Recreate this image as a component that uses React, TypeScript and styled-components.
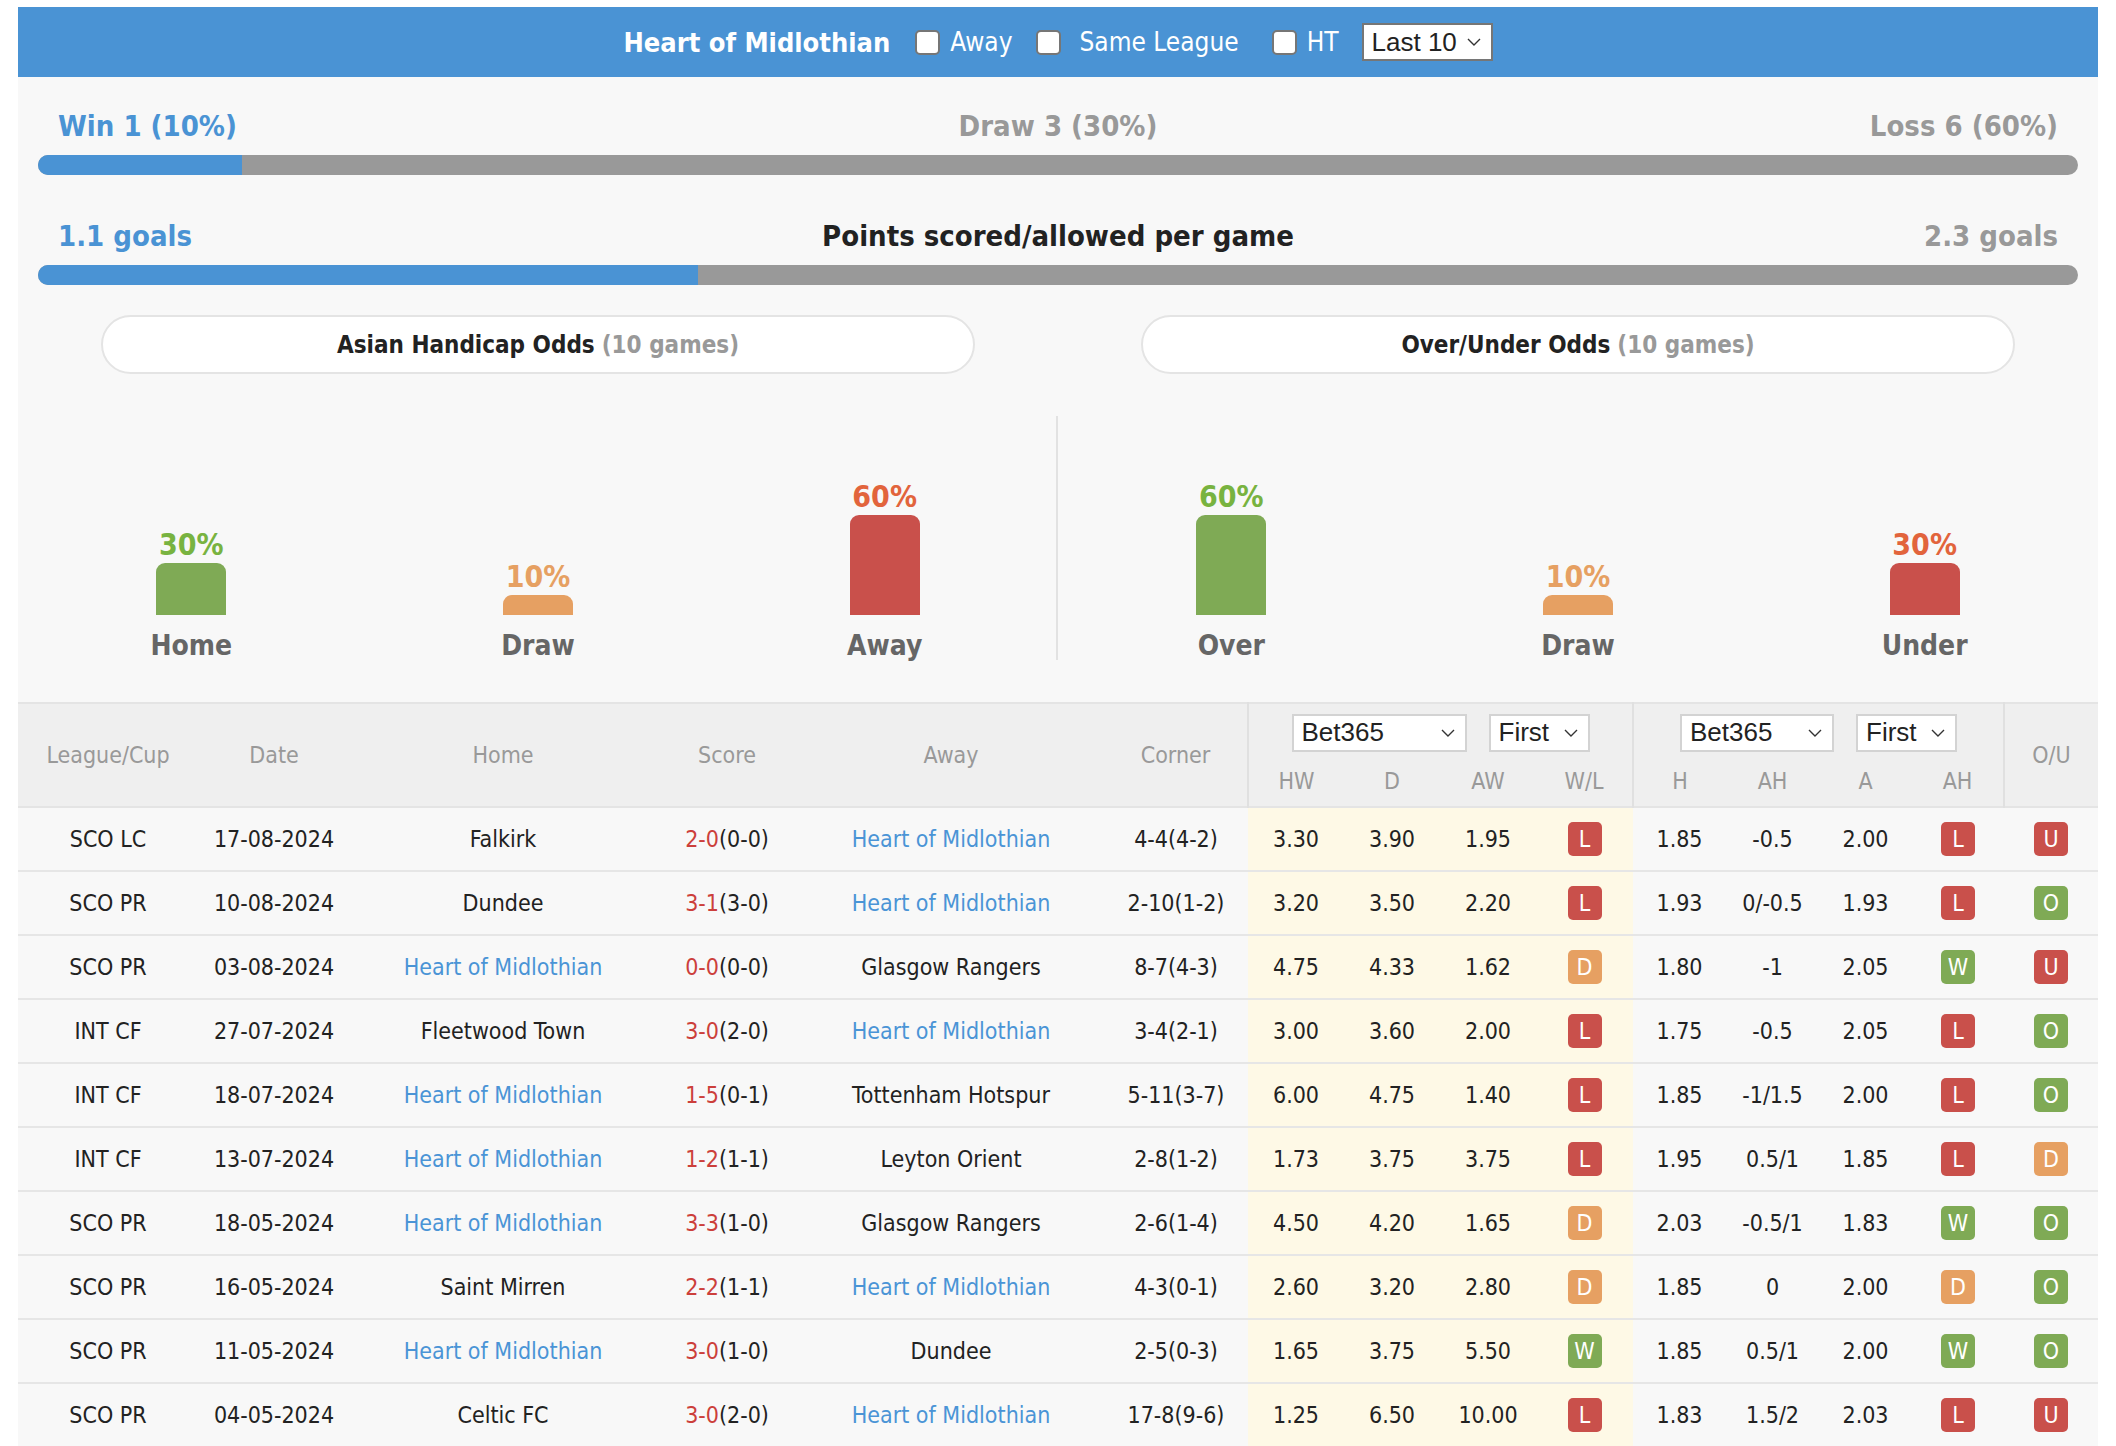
import React from 'react'
import styled, { createGlobalStyle } from 'styled-components'

const GlobalStyle = createGlobalStyle`
  body {
    margin: 0;
    padding: 7px 18px 0;
    background: #fff;
    font-family: Tahoma, "DejaVu Sans Condensed", "DejaVu Sans", sans-serif;
    font-stretch: condensed;
  }
`

const BLUE = '#4a93d4'

const Wrapper = styled.div`
  width: 2080px;
  background: #f8f8f8;
`

const HeaderBar = styled.div`
  height: 70px;
  background: ${BLUE};
  color: #fff;
  display: flex;
  align-items: center;
  justify-content: center;
  font-size: 26px;
`

const Title = styled.span`
  font-weight: bold;
  font-size: 27px;
  margin-right: 25px;
`

const Check = styled.label<{ $gap?: number }>`
  display: flex;
  align-items: center;
  margin-right: ${p => p.$gap ?? 24}px;
`

const Box = styled.input`
  appearance: none;
  width: 25px;
  height: 25px;
  margin: 0 10px 0 0;
  background: #fff;
  border: 2px solid #767676;
  border-radius: 5px;
`

const Select = styled.span<{ $w: number; $dark?: boolean }>`
  display: inline-flex;
  align-items: center;
  justify-content: space-between;
  box-sizing: border-box;
  width: ${p => p.$w}px;
  height: 38px;
  padding: 0 10px 0 8px;
  background: #fff;
  border: 2px solid ${p => (p.$dark ? '#767676' : '#d3d3d3')};
  font-family: "Liberation Sans", Arial, sans-serif;
  font-size: 26px;
  color: #222;
`

const Chevron = () => (
  <svg width="14" height="8" viewBox="0 0 14 8">
    <polyline points="1,1 7,7 13,1" fill="none" stroke="#333" strokeWidth="1.4" />
  </svg>
)

const Stats = styled.div`
  padding: 32px 20px 0;
`

const LabelRow = styled.div<{ $gapTop?: number }>`
  display: flex;
  justify-content: space-between;
  padding: 0 20px;
  margin-top: ${p => p.$gapTop ?? 0}px;
  margin-bottom: 12px;
  font-size: 29px;
  line-height: 34px;
  font-weight: bold;
`

const Label = styled.span<{ $color: string }>`
  color: ${p => p.$color};
  flex: 1;
  &:nth-child(2) { text-align: center; }
  &:last-child { text-align: right; }
`

const Bar = styled.div`
  height: 20px;
  border-radius: 10px;
  background: #999;
  overflow: hidden;
`

const Fill = styled.div`
  height: 100%;
  background: ${BLUE};
`

const Odds = styled.div`
  display: grid;
  grid-template-columns: 1fr 1fr;
  margin-top: 30px;
  padding-bottom: 42px;
`

const Half = styled.div`
  display: flex;
  flex-direction: column;
`

const Pill = styled.div`
  margin: 0 83px;
  height: 59px;
  box-sizing: border-box;
  border: 2px solid #e4e4e4;
  border-radius: 30px;
  background: #fff;
  display: flex;
  align-items: center;
  justify-content: center;
  font-size: 24px;
  font-weight: bold;
  color: #222;
  & > em {
    font-style: normal;
    color: #999;
    margin-left: 7px;
  }
`

const Chart = styled.div<{ $divided?: boolean }>`
  margin-top: 42px;
  height: 244px;
  display: grid;
  grid-template-columns: repeat(3, 1fr);
  align-items: end;
  border-left: 2px solid ${p => (p.$divided ? '#e2e2e2' : 'transparent')};
  margin-left: -2px;
`

const Column = styled.div`
  display: flex;
  flex-direction: column;
  align-items: center;
`

const Pct = styled.span<{ $color: string }>`
  font-size: 30px;
  line-height: 36px;
  font-weight: bold;
  color: ${p => p.$color};
`

const Pillar = styled.div<{ $color: string }>`
  width: 70px;
  background: ${p => p.$color};
  border-radius: 9px 9px 0 0;
`

const Caption = styled.span`
  margin-top: 17px;
  font-size: 28px;
  line-height: 28px;
  font-weight: bold;
  color: #666;
`

const Table = styled.table`
  width: 2080px;
  border-collapse: collapse;
  table-layout: fixed;
  font-size: 23px;
`

const Th = styled.th<{ $split?: boolean }>`
  background: #efefef;
  color: #999;
  font-weight: normal;
  text-align: center;
  padding: 0;
  border: 0;
  ${p => (p.$split ? 'border-left: 2px solid #e0e0e0;' : '')}
`

const HeadRow = styled.tr<{ $h: number; $top?: boolean }>`
  height: ${p => p.$h}px;
  border-top: ${p => (p.$top ? '2px solid #e4e4e4' : '0')};
  border-bottom: ${p => (p.$top ? '0' : '2px solid #e4e4e4')};
`

const SelectPair = styled.div`
  display: flex;
  justify-content: center;
  gap: 22px;
  padding-top: 6px;
`

const Row = styled.tr`
  height: 64px;
  border-bottom: 2px solid #e6e6e6;
`

const Td = styled.td<{ $odds?: boolean }>`
  text-align: center;
  color: #222;
  padding: 0;
  border: 0;
  background: ${p => (p.$odds ? '#fef9e6' : '#f8f8f8')};
`

const Team = styled.span<{ $us?: boolean }>`
  color: ${p => (p.$us ? '#4a94d6' : '#222')};
`

const Goals = styled.span`
  color: #cc3f3b;
`

const BADGE: Record<string, string> = { L: '#c9504b', W: '#7faa55', D: '#e6a062', U: '#c9504b', O: '#7faa55' }

const Badge = styled.span<{ $c: string }>`
  display: inline-flex;
  align-items: center;
  justify-content: center;
  width: 34px;
  height: 34px;
  border-radius: 5px;
  background: ${p => BADGE[p.$c] ?? '#e6a062'};
  color: #fff;
  font-size: 23px;
  vertical-align: middle;
`

type Match = {
  lg: string; date: string; home: string; ft: string; ht: string; away: string; corner: string
  hw: string; d: string; aw: string; wl: string; h: string; ah: string; a: string; ahr: string; ou: string
}

const HEARTS = 'Heart of Midlothian'

const matches: Match[] = [
  { lg: 'SCO LC', date: '17-08-2024', home: 'Falkirk', ft: '2-0', ht: '(0-0)', away: HEARTS, corner: '4-4(4-2)', hw: '3.30', d: '3.90', aw: '1.95', wl: 'L', h: '1.85', ah: '-0.5', a: '2.00', ahr: 'L', ou: 'U' },
  { lg: 'SCO PR', date: '10-08-2024', home: 'Dundee', ft: '3-1', ht: '(3-0)', away: HEARTS, corner: '2-10(1-2)', hw: '3.20', d: '3.50', aw: '2.20', wl: 'L', h: '1.93', ah: '0/-0.5', a: '1.93', ahr: 'L', ou: 'O' },
  { lg: 'SCO PR', date: '03-08-2024', home: HEARTS, ft: '0-0', ht: '(0-0)', away: 'Glasgow Rangers', corner: '8-7(4-3)', hw: '4.75', d: '4.33', aw: '1.62', wl: 'D', h: '1.80', ah: '-1', a: '2.05', ahr: 'W', ou: 'U' },
  { lg: 'INT CF', date: '27-07-2024', home: 'Fleetwood Town', ft: '3-0', ht: '(2-0)', away: HEARTS, corner: '3-4(2-1)', hw: '3.00', d: '3.60', aw: '2.00', wl: 'L', h: '1.75', ah: '-0.5', a: '2.05', ahr: 'L', ou: 'O' },
  { lg: 'INT CF', date: '18-07-2024', home: HEARTS, ft: '1-5', ht: '(0-1)', away: 'Tottenham Hotspur', corner: '5-11(3-7)', hw: '6.00', d: '4.75', aw: '1.40', wl: 'L', h: '1.85', ah: '-1/1.5', a: '2.00', ahr: 'L', ou: 'O' },
  { lg: 'INT CF', date: '13-07-2024', home: HEARTS, ft: '1-2', ht: '(1-1)', away: 'Leyton Orient', corner: '2-8(1-2)', hw: '1.73', d: '3.75', aw: '3.75', wl: 'L', h: '1.95', ah: '0.5/1', a: '1.85', ahr: 'L', ou: 'D' },
  { lg: 'SCO PR', date: '18-05-2024', home: HEARTS, ft: '3-3', ht: '(1-0)', away: 'Glasgow Rangers', corner: '2-6(1-4)', hw: '4.50', d: '4.20', aw: '1.65', wl: 'D', h: '2.03', ah: '-0.5/1', a: '1.83', ahr: 'W', ou: 'O' },
  { lg: 'SCO PR', date: '16-05-2024', home: 'Saint Mirren', ft: '2-2', ht: '(1-1)', away: HEARTS, corner: '4-3(0-1)', hw: '2.60', d: '3.20', aw: '2.80', wl: 'D', h: '1.85', ah: '0', a: '2.00', ahr: 'D', ou: 'O' },
  { lg: 'SCO PR', date: '11-05-2024', home: HEARTS, ft: '3-0', ht: '(1-0)', away: 'Dundee', corner: '2-5(0-3)', hw: '1.65', d: '3.75', aw: '5.50', wl: 'W', h: '1.85', ah: '0.5/1', a: '2.00', ahr: 'W', ou: 'O' },
  { lg: 'SCO PR', date: '04-05-2024', home: 'Celtic FC', ft: '3-0', ht: '(2-0)', away: HEARTS, corner: '17-8(9-6)', hw: '1.25', d: '6.50', aw: '10.00', wl: 'L', h: '1.83', ah: '1.5/2', a: '2.03', ahr: 'L', ou: 'U' },
]

type Slice = { label: string; pct: number; text: string; bar: string }

const handicap: Slice[] = [
  { label: 'Home', pct: 30, text: '#78b340', bar: '#7faa55' },
  { label: 'Draw', pct: 10, text: '#e6a062', bar: '#e6a062' },
  { label: 'Away', pct: 60, text: '#e2643c', bar: '#c9504b' },
]

const overUnder: Slice[] = [
  { label: 'Over', pct: 60, text: '#78b340', bar: '#7faa55' },
  { label: 'Draw', pct: 10, text: '#e6a062', bar: '#e6a062' },
  { label: 'Under', pct: 30, text: '#e2643c', bar: '#c9504b' },
]

const widths = [180, 152, 306, 142, 306, 144, 96, 96, 96, 97, 93, 93, 93, 92, 94]

const OddsHalf = ({ title, data, divided }: { title: string; data: Slice[]; divided?: boolean }) => (
  <Half>
    <Pill>{title}<em>(10 games)</em></Pill>
    <Chart $divided={divided}>
      {data.map(s => (
        <Column key={s.label}>
          <Pct $color={s.text}>{s.pct}%</Pct>
          <Pillar $color={s.bar} style={{ height: s.pct * 1.6 + 4 }} />
          <Caption>{s.label}</Caption>
        </Column>
      ))}
    </Chart>
  </Half>
)

export default function App() {
  return (
    <Wrapper>
      <GlobalStyle />
      <HeaderBar>
        <Title>Heart of Midlothian</Title>
        <Check><Box type="checkbox" />Away</Check>
        <Check $gap={33}><Box type="checkbox" style={{ marginRight: 18 }} />Same League</Check>
        <Check $gap={23}><Box type="checkbox" />HT</Check>
        <Select $w={131} $dark>Last 10<Chevron /></Select>
      </HeaderBar>

      <Stats>
        <LabelRow>
          <Label $color={BLUE}>Win 1 (10%)</Label>
          <Label $color="#999">Draw 3 (30%)</Label>
          <Label $color="#999">Loss 6 (60%)</Label>
        </LabelRow>
        <Bar><Fill style={{ width: '10%' }} /></Bar>
        <LabelRow $gapTop={44}>
          <Label $color={BLUE}>1.1 goals</Label>
          <Label $color="#222">Points scored/allowed per game</Label>
          <Label $color="#999">2.3 goals</Label>
        </LabelRow>
        <Bar><Fill style={{ width: `${(1.1 / 3.4) * 100}%` }} /></Bar>
      </Stats>

      <Odds>
        <OddsHalf title="Asian Handicap Odds" data={handicap} />
        <OddsHalf title="Over/Under Odds" data={overUnder} divided />
      </Odds>

      <Table>
        <colgroup>
          {widths.map((w, i) => <col key={i} style={{ width: w }} />)}
        </colgroup>
        <thead>
          <HeadRow $h={52} $top>
            <Th rowSpan={2}>League/Cup</Th>
            <Th rowSpan={2}>Date</Th>
            <Th rowSpan={2}>Home</Th>
            <Th rowSpan={2}>Score</Th>
            <Th rowSpan={2}>Away</Th>
            <Th rowSpan={2}>Corner</Th>
            <Th colSpan={4} $split>
              <SelectPair>
                <Select $w={175}>Bet365<Chevron /></Select>
                <Select $w={101}>First<Chevron /></Select>
              </SelectPair>
            </Th>
            <Th colSpan={4} $split>
              <SelectPair>
                <Select $w={154}>Bet365<Chevron /></Select>
                <Select $w={101}>First<Chevron /></Select>
              </SelectPair>
            </Th>
            <Th rowSpan={2} $split>O/U</Th>
          </HeadRow>
          <HeadRow $h={52}>
            <Th $split>HW</Th>
            <Th>D</Th>
            <Th>AW</Th>
            <Th>W/L</Th>
            <Th $split>H</Th>
            <Th>AH</Th>
            <Th>A</Th>
            <Th>AH</Th>
          </HeadRow>
        </thead>
        <tbody>
          {matches.map(m => (
            <Row key={m.date}>
              <Td>{m.lg}</Td>
              <Td>{m.date}</Td>
              <Td><Team $us={m.home === HEARTS}>{m.home}</Team></Td>
              <Td><Goals>{m.ft}</Goals>{m.ht}</Td>
              <Td><Team $us={m.away === HEARTS}>{m.away}</Team></Td>
              <Td>{m.corner}</Td>
              <Td $odds>{m.hw}</Td>
              <Td $odds>{m.d}</Td>
              <Td $odds>{m.aw}</Td>
              <Td $odds><Badge $c={m.wl}>{m.wl}</Badge></Td>
              <Td>{m.h}</Td>
              <Td>{m.ah}</Td>
              <Td>{m.a}</Td>
              <Td><Badge $c={m.ahr}>{m.ahr}</Badge></Td>
              <Td><Badge $c={m.ou}>{m.ou}</Badge></Td>
            </Row>
          ))}
        </tbody>
      </Table>
    </Wrapper>
  )
}
